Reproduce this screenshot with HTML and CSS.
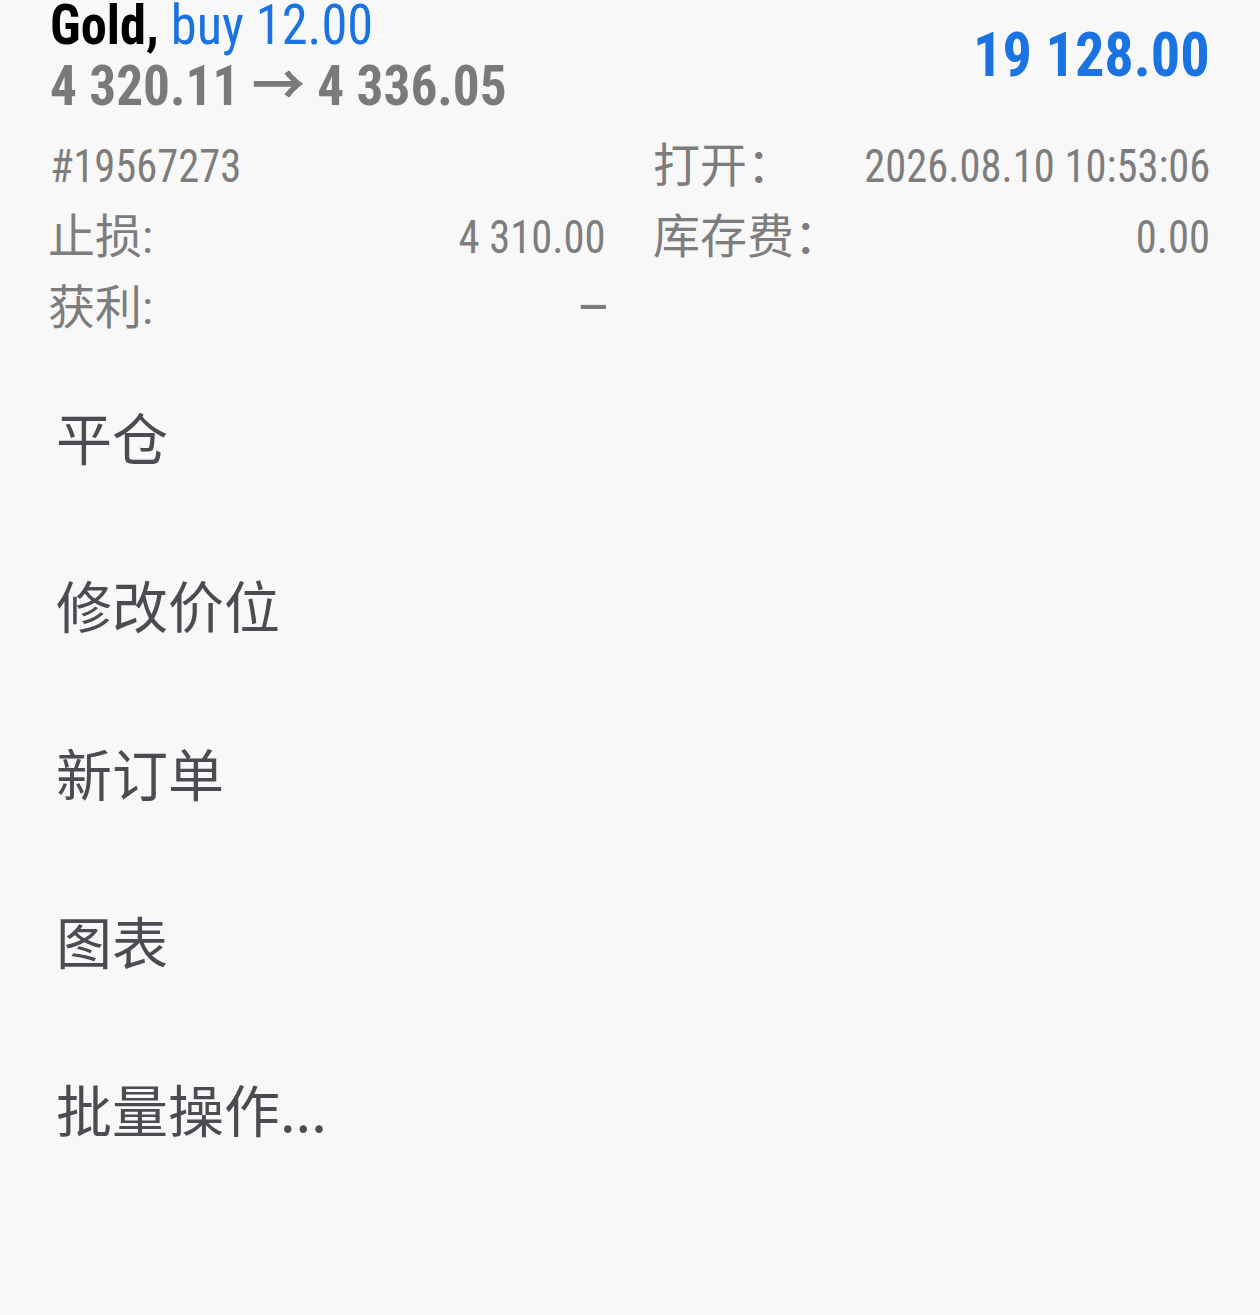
FILE: index.html
```html
<!DOCTYPE html>
<html lang="zh-CN">
<head>
<meta charset="utf-8">
<title>Order</title>
<link rel="stylesheet" href="styles.css">
</head>
<body>
<div class="sheet">
  <header class="head">
    <div class="head-left">
      <div class="title"><span class="squeeze sq-title"><span class="sym">Gold,</span> <span class="side">buy 12.00</span></span></div>
      <div class="prices"><span class="squeeze sq-prices">4 320.11 → 4 336.05</span></div>
    </div>
    <div class="profit"><span class="squeeze sq-profit">19 128.00</span></div>
  </header>
  <section class="details">
    <div class="cell"><span class="num squeeze sq-left">#19567273</span><span class="val"></span></div>
    <div class="cell"><span class="label">打开：</span><span class="num squeeze sq-right">2026.08.10 10:53:06</span></div>
    <div class="cell"><span class="label">止损:</span><span class="num squeeze sq-right">4 310.00</span></div>
    <div class="cell"><span class="label">库存费：</span><span class="num squeeze sq-right">0.00</span></div>
    <div class="cell"><span class="label">获利:</span><span class="num squeeze sq-dash">–</span></div>
    <div class="cell"></div>
  </section>
  <nav class="menu">
    <div class="item">平仓</div>
    <div class="item">修改价位</div>
    <div class="item">新订单</div>
    <div class="item">图表</div>
    <div class="item">批量操作...</div>
  </nav>
</div>
</body>
</html>
```
FILE: styles.css
```css
html, body {
  margin: 0;
  padding: 0;
  background: #f8f8f8;
}
body {
  font-family: Roboto, "Noto Sans CJK SC", sans-serif;
}
.sheet {
  padding: 3px 50px 0 50px;
}
.head {
  display: flex;
  justify-content: space-between;
  align-items: flex-start;
}
.title, .prices, .profit, .num {
  font-stretch: 75%;
}
.squeeze {
  display: inline-block;
  white-space: nowrap;
}
.sq-title { transform: scaleX(0.936); transform-origin: left center; }
.sq-prices { transform: scaleX(0.952); transform-origin: left center; }
.sq-profit { transform: scaleX(0.94); transform-origin: right center; }
.sq-left { transform: scaleX(0.905); transform-origin: left center; }
.sq-right { transform: scaleX(0.905); transform-origin: right center; }
.sq-dash { transform: scale(1.3, 1.2); transform-origin: right center; margin-right: -6px; }
.title {
  font-size: 56px;
  line-height: 44px;
  white-space: nowrap;
}
.sym {
  font-weight: 700;
  color: #000;
}
.side {
  color: #1a73e0;
}
.prices {
  font-size: 56px;
  line-height: 78px;
  font-weight: 700;
  color: #7a7a7a;
  white-space: nowrap;
}
.profit {
  font-size: 62px;
  line-height: 80px;
  font-weight: 700;
  color: #1a73e0;
  margin-top: 12px;
}
.details {
  margin-top: 5px;
  display: grid;
  grid-template-columns: 555px 555px;
  column-gap: 50px;
  font-size: 47px;
  line-height: 71px;
  color: #7d7d7d;
}
.cell {
  display: flex;
  justify-content: space-between;
  height: 71px;
  white-space: nowrap;
}
.label {
  margin-left: -2px;
}
.menu {
  margin-top: 8px;
  padding-left: 6px;
}
.item {
  height: 168px;
  display: flex;
  align-items: center;
  font-family: "Noto Sans CJK SC", sans-serif;
  font-size: 56px;
  color: #4b4b52;
}
```
